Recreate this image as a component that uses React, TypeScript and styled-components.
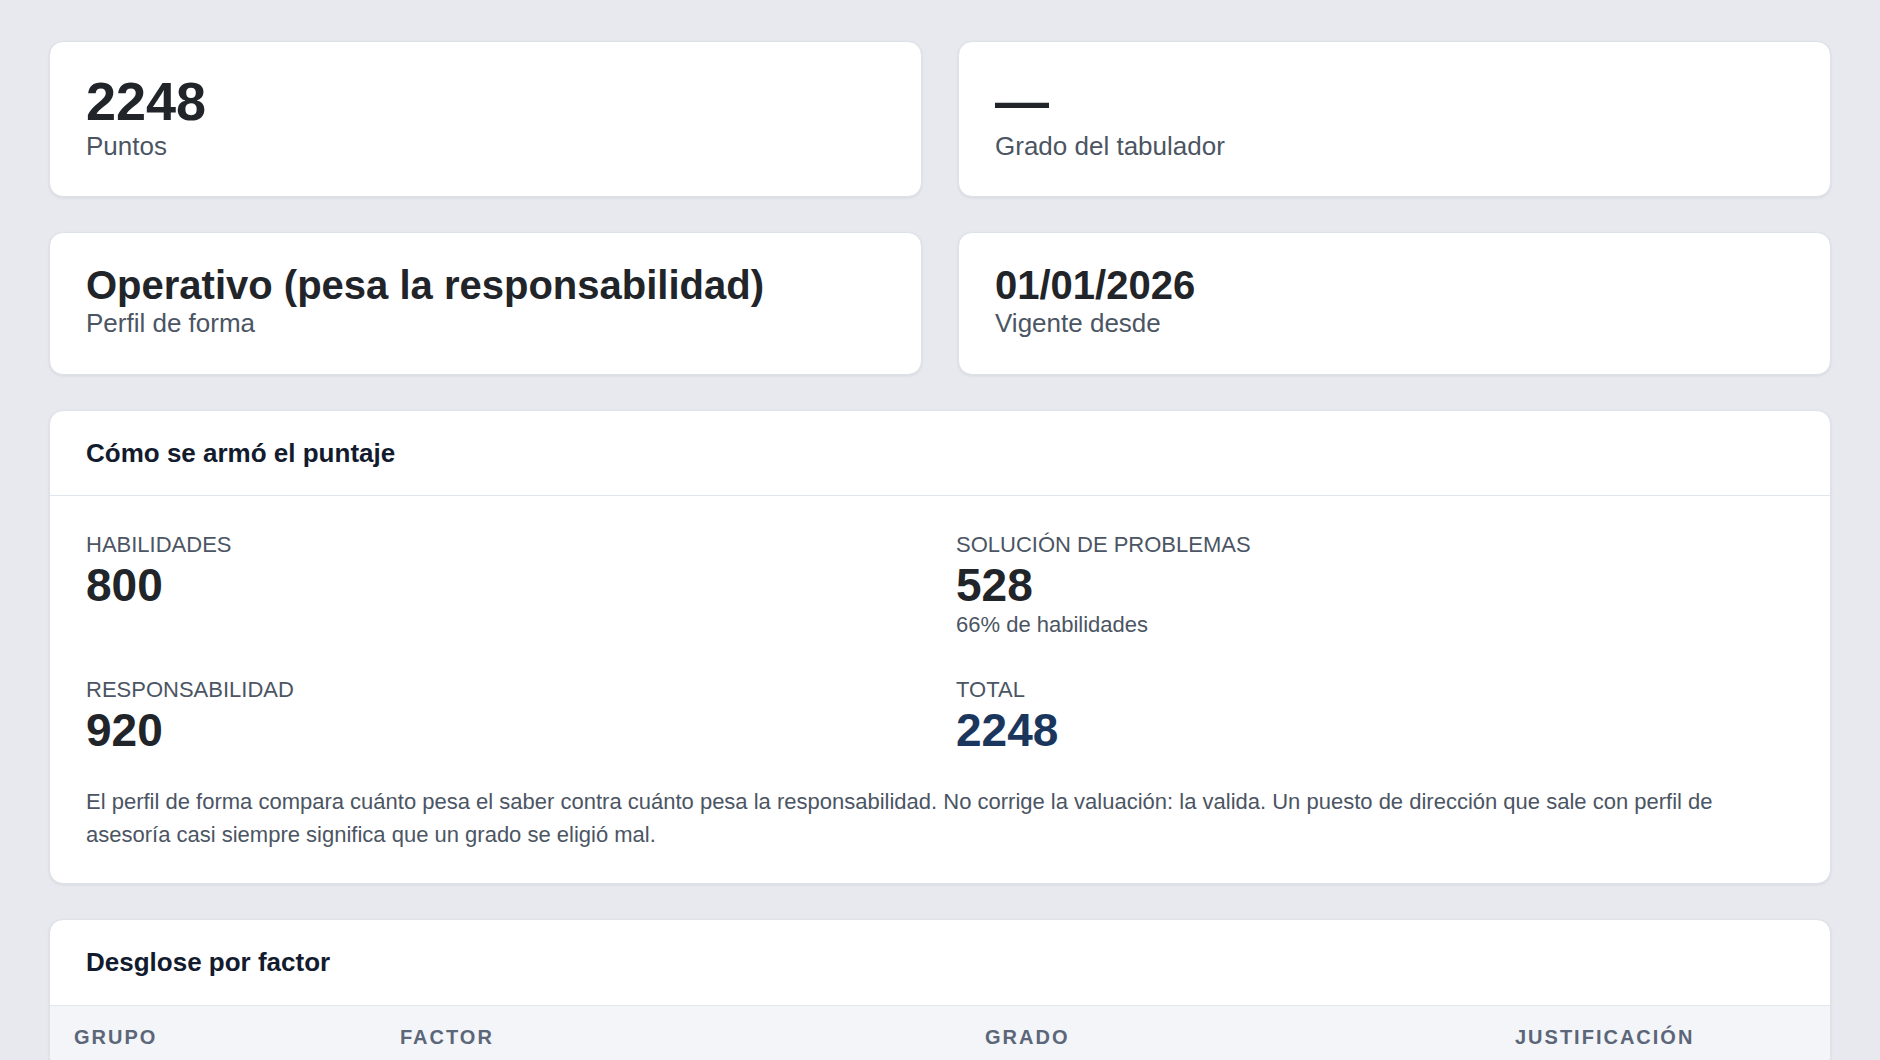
import React from 'react';
import styled, { createGlobalStyle } from 'styled-components';

const GlobalStyle = createGlobalStyle`
  html, body {
    margin: 0;
    padding: 0;
    background: #e7e9ee;
    font-family: 'Liberation Sans', Arial, Helvetica, sans-serif;
    color: #212529;
  }
  * {
    box-sizing: border-box;
  }
`;

const Page = styled.main`
  display: flex;
  flex-direction: column;
  gap: 35px;
  padding: 41px 49px 48px;
`;

const StatsGrid = styled.div`
  display: grid;
  grid-template-columns: 1fr 1fr;
  column-gap: 36px;
  row-gap: 35px;
`;

const Card = styled.section`
  background: #ffffff;
  border: 1px solid #dde1e8;
  border-radius: 14px;
  box-shadow: 0 1px 3px rgba(15, 23, 42, 0.08);
  overflow: hidden;
`;

const StatCard = styled(Card)`
  padding: 32px 36px;
`;

const StatValue = styled.div<{ $size: 'lg' | 'md' }>`
  font-size: ${(p) => (p.$size === 'lg' ? '54px' : '40px')};
  font-weight: 700;
  line-height: 1;
  color: #212529;
`;

const StatLabel = styled.div`
  font-size: 26px;
  line-height: 1.4;
  color: #4b5563;
`;

const CardHeader = styled.header`
  padding: 24px 36px;
  border-bottom: 1px solid #e2e6ed;
`;

const CardTitle = styled.h2`
  margin: 0;
  font-size: 26px;
  font-weight: 700;
  line-height: 1.4;
  color: #131b2e;
`;

const CardBody = styled.div`
  padding: 32px 36px;
`;

const ScoreGrid = styled.div`
  display: grid;
  grid-template-columns: 1fr 1fr;
  column-gap: 32px;
  row-gap: 32px;
`;

const ScoreLabel = styled.div`
  font-size: 22px;
  line-height: 1.5;
  text-transform: uppercase;
  color: #4b5563;
`;

const ScoreValue = styled.div<{ $accent?: boolean }>`
  margin-top: 1px;
  font-size: 46px;
  font-weight: 700;
  line-height: 1;
  color: ${(p) => (p.$accent ? '#1b365d' : '#212529')};
`;

const ScoreNote = styled.div`
  font-size: 22px;
  line-height: 1.5;
  color: #4b5563;
`;

const Note = styled.p`
  margin: 32px 0 0;
  font-size: 22px;
  line-height: 1.5;
  color: #4b5563;
`;

const Table = styled.table`
  width: 100%;
  border-collapse: collapse;
  table-layout: fixed;
`;

const HeadCell = styled.th`
  padding: 16px 24px;
  background: #f3f5f9;
  text-align: left;
  font-size: 20px;
  font-weight: 700;
  line-height: 1.5;
  letter-spacing: 2px;
  text-transform: uppercase;
  color: #5b6678;
`;

const stats = [
  { value: '2248', label: 'Puntos', size: 'lg' as const },
  { value: '—', label: 'Grado del tabulador', size: 'lg' as const },
  { value: 'Operativo (pesa la responsabilidad)', label: 'Perfil de forma', size: 'md' as const },
  { value: '01/01/2026', label: 'Vigente desde', size: 'md' as const },
];

const scores = [
  { label: 'Habilidades', value: '800' },
  { label: 'Solución de problemas', value: '528', note: '66% de habilidades' },
  { label: 'Responsabilidad', value: '920' },
  { label: 'Total', value: '2248', accent: true },
];

const columns = [
  { name: 'Grupo', width: 326 },
  { name: 'Factor', width: 585 },
  { name: 'Grado', width: 530 },
  { name: 'Justificación', width: 339 },
];

const App = () => {
  return (
    <>
      <GlobalStyle />
      <Page>
        <StatsGrid>
          {stats.map((s) => (
            <StatCard key={s.label}>
              <StatValue $size={s.size}>{s.value}</StatValue>
              <StatLabel>{s.label}</StatLabel>
            </StatCard>
          ))}
        </StatsGrid>

        <Card>
          <CardHeader>
            <CardTitle>Cómo se armó el puntaje</CardTitle>
          </CardHeader>
          <CardBody>
            <ScoreGrid>
              {scores.map((s) => (
                <div key={s.label}>
                  <ScoreLabel>{s.label}</ScoreLabel>
                  <ScoreValue $accent={s.accent}>{s.value}</ScoreValue>
                  {s.note && <ScoreNote>{s.note}</ScoreNote>}
                </div>
              ))}
            </ScoreGrid>
            <Note>
              El perfil de forma compara cuánto pesa el saber contra cuánto pesa la responsabilidad. No
              corrige la valuación: la valida. Un puesto de dirección que sale con perfil de asesoría casi
              siempre significa que un grado se eligió mal.
            </Note>
          </CardBody>
        </Card>

        <Card>
          <CardHeader>
            <CardTitle>Desglose por factor</CardTitle>
          </CardHeader>
          <Table>
            <colgroup>
              {columns.map((c) => (
                <col key={c.name} style={{ width: c.width }} />
              ))}
            </colgroup>
            <thead>
              <tr>
                {columns.map((c) => (
                  <HeadCell key={c.name}>{c.name}</HeadCell>
                ))}
              </tr>
            </thead>
          </Table>
        </Card>
      </Page>
    </>
  );
};

export default App;
